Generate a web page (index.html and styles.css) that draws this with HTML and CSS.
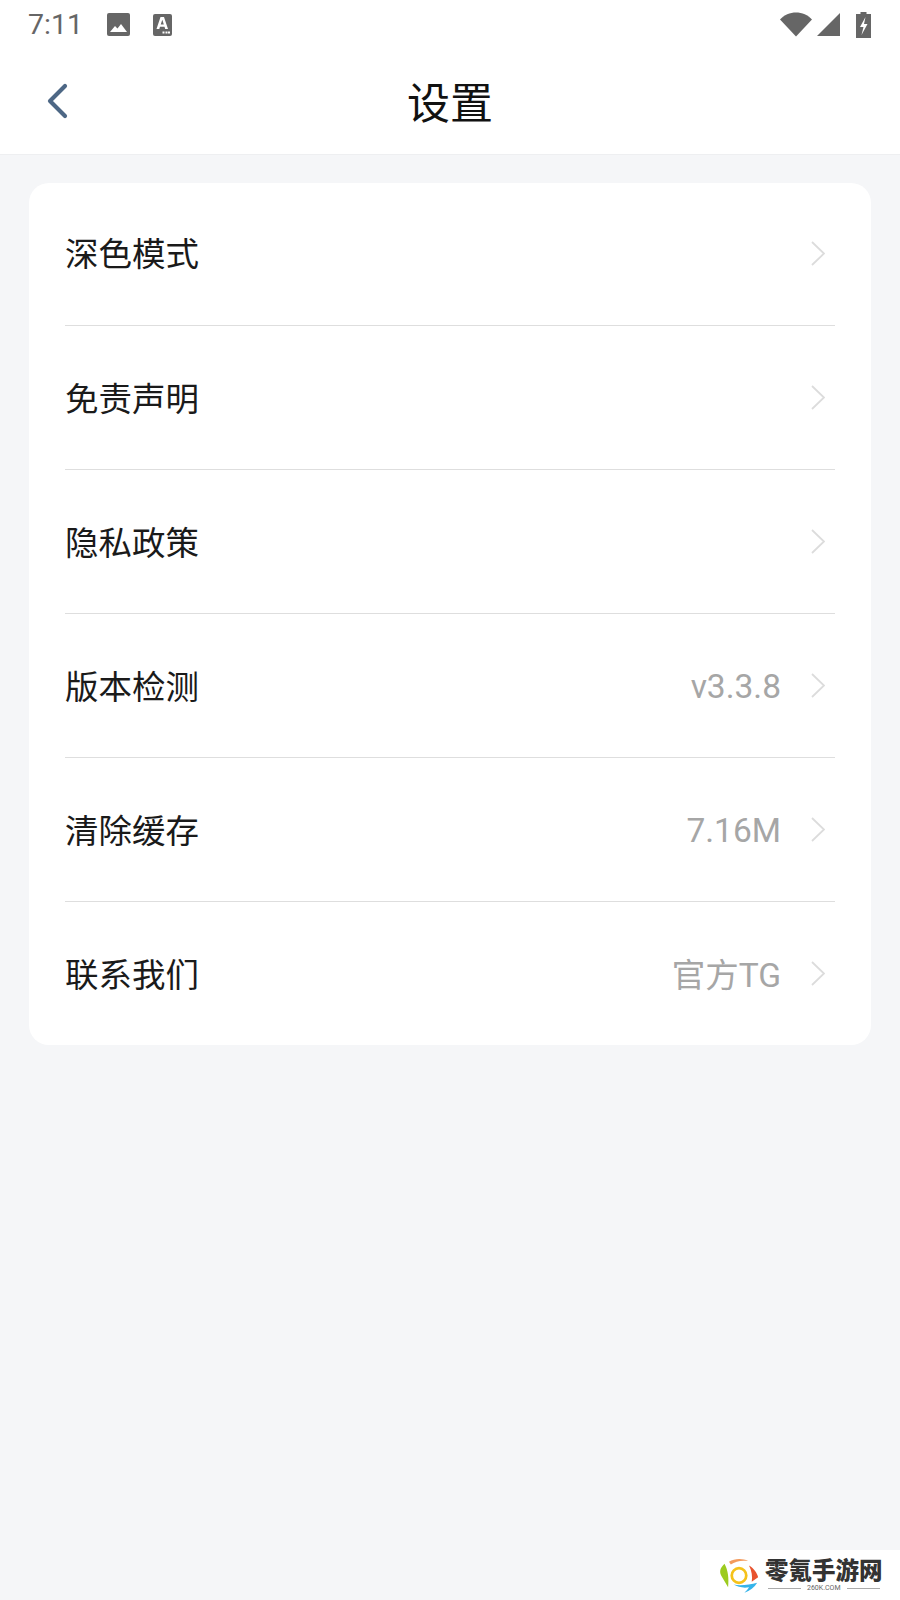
FILE: index.html
```html
<!DOCTYPE html>
<html lang="zh-CN">
<head>
  <meta charset="UTF-8">
  <meta name="viewport" content="width=device-width, initial-scale=1.0">
  <title>设置</title>
  <link rel="stylesheet" href="styles.css">
</head>
<body>
  <div class="status-bar">
    <span class="time">7:11</span>
    <svg class="ic-photo" viewBox="0 0 23 23"><rect width="23" height="23" rx="2" fill="#666"/><path d="M3 19l5-6 2.500 2.500 3.500-4.500 6 8z" fill="#fff"/></svg>
    <svg class="ic-font" viewBox="0 0 19 22"><rect width="19" height="22" rx="2" fill="#666"/><path d="M3.500 15L7.500 3h3.500l4 12h-2.800l-.7-2.300H7l-.7 2.300zM7.700 10.500h3.100L9.300 5.800z" fill="#fff"/><path d="M9.500 17.500h2v2h-2zM12.500 17.500h2v2h-2zM15 17.500h2v2h-2z" fill="#fff"/></svg>
    <span class="spacer"></span>
    <svg class="ic-wifi" viewBox="0 0 32 25"><path d="M0 7.500C4 3 10 .5 16 .5s12 2.500 16 7L16 24.500z" fill="#666"/></svg>
    <svg class="ic-signal" viewBox="0 0 23 23"><path d="M0 23L23 0v23z" fill="#666"/></svg>
    <svg class="ic-battery" viewBox="0 0 15 26"><path d="M4.500 0h6v2H15v24H0V2h4.500z" fill="#666"/><path d="M9.500 5L4 15h3.500L5.500 23 11.500 12H8z" fill="#fff"/></svg>
  </div>

  <header class="nav-bar">
    <svg class="back" viewBox="0 0 22 36"><path d="M19 3L4 18l15 15" fill="none" stroke="#4d6785" stroke-width="4.200" stroke-linecap="round" stroke-linejoin="round"/></svg>
    <h1>设置</h1>
  </header>

  <main class="content">
    <div class="card">
      <div class="row">
        <span class="label">深色模式</span>
        <svg class="arrow" viewBox="0 0 14 25"><path d="M1 1l12 11.500L1 24" fill="none" stroke="#dcdcdc" stroke-width="1.800"/></svg>
      </div>
      <div class="row">
        <span class="label">免责声明</span>
        <svg class="arrow" viewBox="0 0 14 25"><path d="M1 1l12 11.500L1 24" fill="none" stroke="#dcdcdc" stroke-width="1.800"/></svg>
      </div>
      <div class="row">
        <span class="label">隐私政策</span>
        <svg class="arrow" viewBox="0 0 14 25"><path d="M1 1l12 11.500L1 24" fill="none" stroke="#dcdcdc" stroke-width="1.800"/></svg>
      </div>
      <div class="row">
        <span class="label">版本检测</span>
        <span class="value">v3.3.8</span>
        <svg class="arrow" viewBox="0 0 14 25"><path d="M1 1l12 11.500L1 24" fill="none" stroke="#dcdcdc" stroke-width="1.800"/></svg>
      </div>
      <div class="row">
        <span class="label">清除缓存</span>
        <span class="value">7.16M</span>
        <svg class="arrow" viewBox="0 0 14 25"><path d="M1 1l12 11.500L1 24" fill="none" stroke="#dcdcdc" stroke-width="1.800"/></svg>
      </div>
      <div class="row">
        <span class="label">联系我们</span>
        <span class="value">官方TG</span>
        <svg class="arrow" viewBox="0 0 14 25"><path d="M1 1l12 11.500L1 24" fill="none" stroke="#dcdcdc" stroke-width="1.800"/></svg>
      </div>
    </div>
  </main>

  <div class="watermark">
    <svg class="wm-logo" viewBox="0 0 44 38">
      <circle cx="22" cy="19" r="8" fill="none" stroke="#f5c21b" stroke-width="3"/>
      <path d="M6 6C1 11 0 15 3 20l7 12C11 22 10 13 6 6z" fill="#9ccb1f"/>
      <path d="M11 4C17 0 26 0 32 3 25 2 18 3 13 7z" fill="#f39a5c"/>
      <path d="M33 8c5 3 9 8 10 13l-7 5c1-6 0-12-3-18z" fill="#e8532f"/>
      <path d="M16 29c7 2 18 0 26-2-3 5-8 9-14 11 2-2 4-4 5-6-6 1-12 0-17-3z" fill="#35b3ea"/>
    </svg>
    <div class="wm-text">
      <span class="wm-name">零氪手游网</span>
      <span class="wm-url">260K.COM</span>
    </div>
  </div>
</body>
</html>
```

FILE: styles.css
```css
* { box-sizing: border-box; }
html, body { margin: 0; padding: 0; }
body { width: 900px; height: 1600px; background: #f5f6f8; font-family: Roboto, "Noto Sans CJK SC", sans-serif; position: relative; overflow: hidden; }

.status-bar { height: 50px; background: #fff; display: flex; align-items: center; padding: 0 29px 1px 28px; }
.time { font-size: 28.500px; color: #666; width: 80px; }
.ic-photo { width: 23px; height: 23px; margin-left: -1px; }
.ic-font { width: 19px; height: 22px; margin-left: 23px; }
.spacer { flex: 1; }
.ic-wifi { width: 32px; height: 25px; }
.ic-signal { width: 23px; height: 23px; margin-left: 5px; }
.ic-battery { width: 15px; height: 26px; margin-left: 16px; }

.nav-bar { height: 105px; background: #fff; border-bottom: 1px solid #eeeff1; position: relative; display: flex; align-items: center; justify-content: center; }
.nav-bar h1 { margin: 0 0 4px; font-size: 43px; font-weight: 400; color: #111; }
.back { position: absolute; left: 46px; top: 33px; width: 22px; height: 36px; }

.content { padding: 28px 29px; }
.card { background: #fff; border-radius: 20px; height: 862px; padding: 0 36px; }
.row { height: 144px; border-bottom: 1px solid #dedede; display: flex; align-items: center; padding-bottom: 1px; }
.row:first-child { height: 143px; padding-bottom: 2px; }
.row:last-child { height: 143px; border-bottom: none; padding-bottom: 0; }
.label { flex: 1; font-size: 33.500px; color: #1a1a1a; margin-bottom: 2px; }
.row:first-child .label { margin-bottom: 4px; }
.value { font-size: 33.500px; color: #a6a6a6; margin-right: 30px; margin-top: 2px; }
.row:last-child .value { margin-top: -3px; }
.arrow { width: 14px; height: 25px; margin-right: 10px; }

.watermark { position: absolute; left: 700px; bottom: 0; width: 200px; height: 50px; background: #fff; display: flex; align-items: center; padding-left: 19px; }
.wm-logo { width: 40px; height: 35px; margin-right: 6px; }
.wm-text { display: flex; flex-direction: column; align-items: center; }
.wm-name { font-size: 23.500px; line-height: 26px; font-weight: 900; color: #333; white-space: nowrap; }
.wm-url { font-size: 7px; line-height: 9px; color: #666; position: relative; width: 112px; text-align: center; }
.wm-url::before, .wm-url::after { content: ""; position: absolute; top: 4px; width: 33px; height: 1px; background: #aaa; }
.wm-url::before { left: 0; }
.wm-url::after { right: 0; }
```
